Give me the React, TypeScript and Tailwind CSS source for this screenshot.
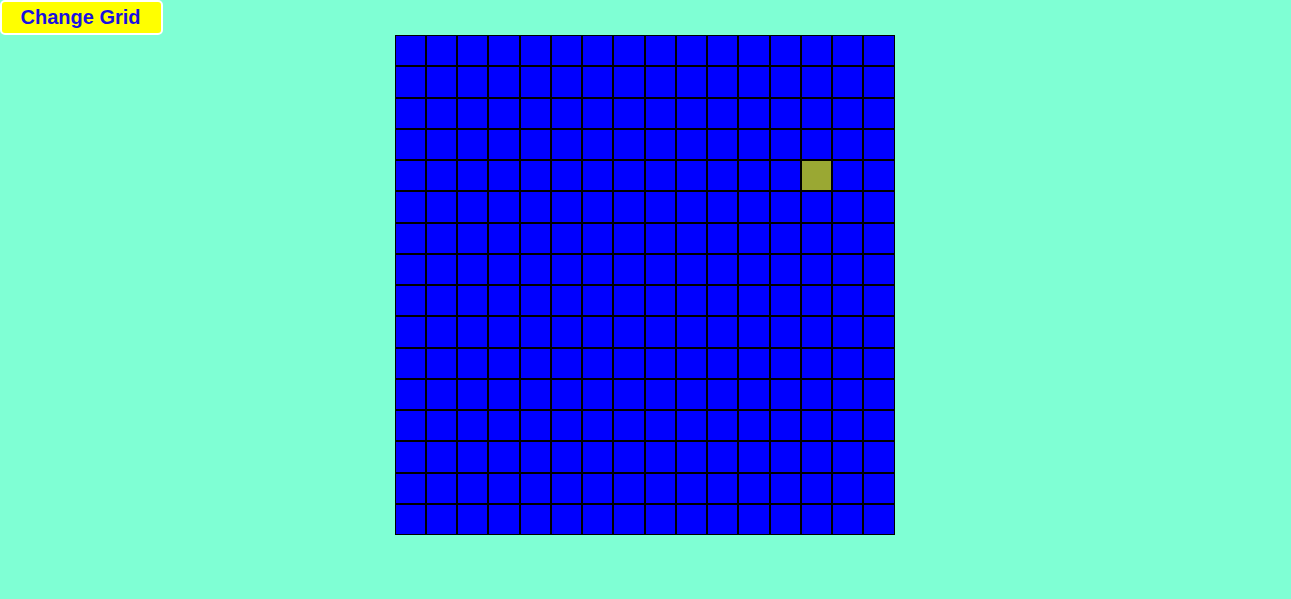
import { useState } from 'react'

const SIZE = 16

export default function App() {
  const [lit] = useState({ row: 4, col: 13 })

  return (
    <div className="min-h-screen bg-[#7fffd4] font-['Liberation_Sans',Arial,sans-serif]">
      <button className="block h-[35px] w-[163px] rounded-[5px] border-2 border-white bg-[#ffff00] pr-[2px] pb-[5px] text-[20px] font-bold text-[#1a10e0]">
        Change Grid
      </button>

      <div className="mx-auto grid h-[500px] w-[500px] -translate-x-px grid-cols-16 grid-rows-16">
        {Array.from({ length: SIZE * SIZE }).map((_, i) => {
          const on = Math.floor(i / SIZE) === lit.row && i % SIZE === lit.col
          return (
            <div
              key={i}
              className={on ? 'border border-black bg-[#9aa833]' : 'border border-black bg-[#0000ff]'}
            />
          )
        })}
      </div>
    </div>
  )
}
